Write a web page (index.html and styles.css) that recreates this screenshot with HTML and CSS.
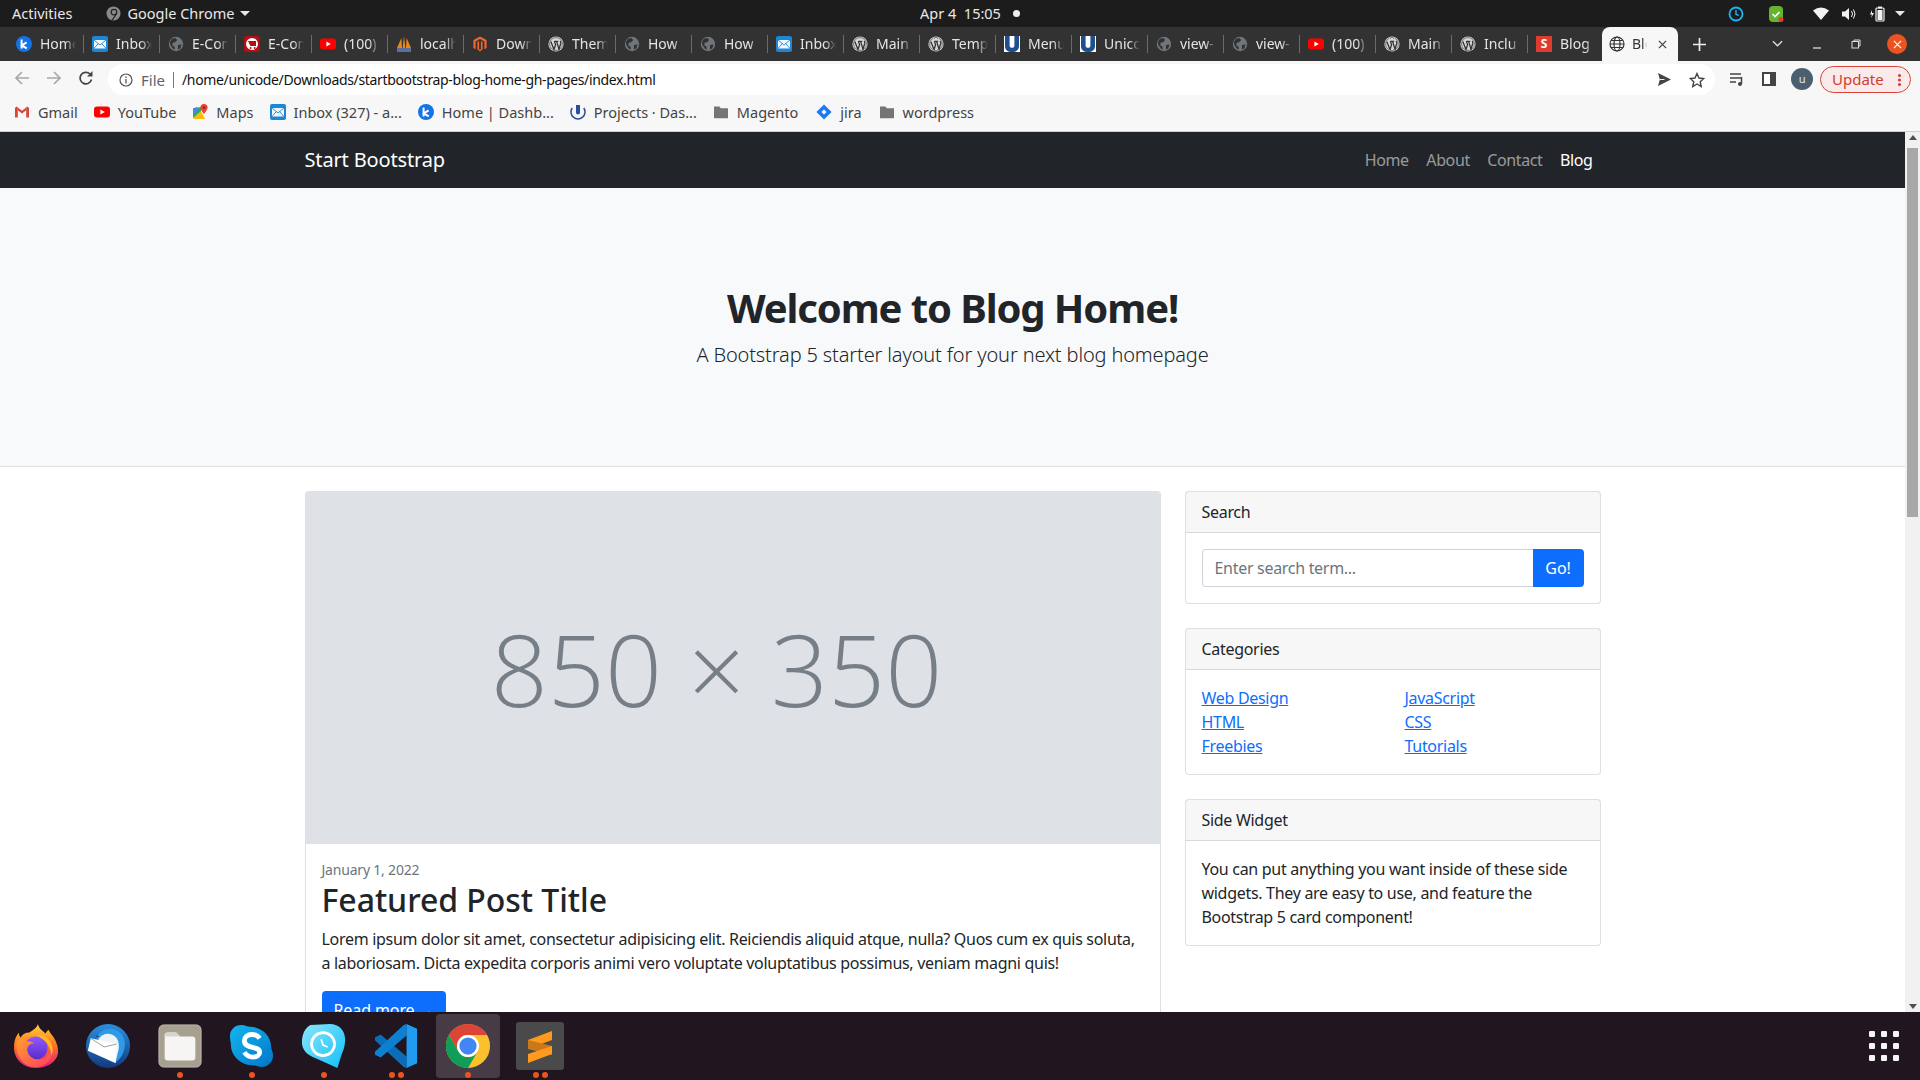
FILE: index.html
```html
<!DOCTYPE html>
<html lang="en">

<head>
    <meta charset="UTF-8">
    <meta name="viewport" content="width=device-width, initial-scale=1.0">
    <title>Blog Home</title>
    <link rel="stylesheet" href="styles.css">
</head>

<body>
    <svg class="defs" width="0" height="0">
        <symbol id="i-k" viewBox="0 0 16 16"><circle cx="8" cy="8" r="8" fill="#1473e6"/><path d="M5.6 3.6v8.8M10.6 6.4 5.8 9.4l5 3" fill="none" stroke="#fff" stroke-width="2"/></symbol>
        <symbol id="i-mail" viewBox="0 0 16 16"><rect width="16" height="16" rx="2" fill="#1c87d6"/><rect x="2" y="4" width="12" height="8.5" fill="#f4f8fc"/><path d="M2 4l6 5 6-5M2 12.5l4.4-5M14 12.5 9.6 7.5" fill="none" stroke="#1c87d6" stroke-width=".9"/></symbol>
        <symbol id="i-globe" viewBox="0 0 16 16"><circle cx="8" cy="8" r="7.2" fill="#70757a"/><path d="M4 2.8 7.4 2l1.8 2-2 2.2-2.4.4-.6 2.6 2.2 1.4.4 3-1.6-.6L2.4 9 1.8 6ZM10 9l3.6-.6-1.4 4L10 13.6Z" fill="#323232"/></symbol>
        <symbol id="i-ecom" viewBox="0 0 16 16"><rect width="16" height="16" rx="2" fill="#b30f14"/><circle cx="8" cy="8" r="6" fill="#fff"/><path d="M4 5h8v5H6.4Z" fill="#b30f14"/><circle cx="6.6" cy="12" r="1" fill="#b30f14"/><circle cx="10.6" cy="12" r="1" fill="#b30f14"/></symbol>
        <symbol id="i-yt" viewBox="0 0 16 16"><rect y="2.4" width="16" height="11.2" rx="3" fill="#f00"/><path d="M6.4 5.6 10.8 8l-4.4 2.4Z" fill="#fff"/></symbol>
        <symbol id="i-pma" viewBox="0 0 16 16"><path d="M1 12 5.4 2l.6 10ZM6.6 12 8 0l1.4 12ZM10 12 10.6 2 15 12Z" fill="#e8871e"/><rect x="1" y="12" width="14" height="4" fill="#5b6f99"/></symbol>
        <symbol id="i-mag" viewBox="0 0 16 16"><path d="M8 .4 14.6 4v8L12.4 13.2V5.4L8 2.9 3.6 5.4v7.8L1.4 12V4Z" fill="#ee672f"/><path d="M8.9 4.900 10.600 5.900v7.400L8 15.600 5.400 13.300V5.900L7.100 4.900v8.200L8 13.900l.9-.8Z" fill="#ee672f"/></symbol>
        <symbol id="i-wp" viewBox="0 0 16 16"><circle cx="8" cy="8" r="7.600" fill="#d8d8d8"/><circle cx="8" cy="8" r="6.400" fill="#d8d8d8" stroke="#323232" stroke-width=".6"/><path d="M2.800 5.600 6 13.400l1.600-4.600-1.200-3.400M6.200 5.400h4M8.600 5.400l2.400 7.800 1.800-6c.3-1.200-.4-1.800-.6-2.200" fill="none" stroke="#323232" stroke-width="1.300"/></symbol>
        <symbol id="i-u" viewBox="0 0 16 16"><rect width="16" height="16" fill="#fff"/><path d="M1 0h4.600v9.400c0 1.500 1 2.400 2.400 2.400s2.400-.9 2.400-2.400V0H15v10c0 4-3 6-7 6s-7-2-7-6Z" fill="#1e4f8f"/></symbol>
        <symbol id="i-gmail" viewBox="0 0 16 16"><path d="M1 3.400v10h2.800V7.200L8 10.400l4.200-3.200v6.200H15v-10l-1.600-1L8 6.400 2.600 2.400Z" fill="#f1f1f1"/><path d="M1 13.400V4l1.600-1.400 1.200 1v9.800ZM12.200 13.400V3.600l1.200-1L15 4v9.400Z" fill="#d9453a"/><path d="M3.800 3.600 8 6.800l4.200-3.200v2.600L8 9.400 3.800 6.200Z" fill="#d9453a"/></symbol>
        <symbol id="i-maps" viewBox="0 0 16 16"><path d="M1 4.500 9 3v12l-8-1Z" fill="#34a853"/><path d="M1 14 9 7l4 8H3Z" fill="#fbbc04"/><path d="M1 4.500 5 3l2 3-6 5Z" fill="#4285f4"/><path d="M12 0a3.600 3.600 0 0 0-3.600 3.600C8.400 6 12 10 12 10s3.600-4 3.600-6.400A3.600 3.600 0 0 0 12 0Z" fill="#ea4335"/><circle cx="12" cy="3.600" r="1.300" fill="#8c2a20"/></symbol>
        <symbol id="i-proj" viewBox="0 0 16 16"><path d="M2.200 4a7 7 0 1 0 11.600 0" fill="none" stroke="#2a4f9c" stroke-width="1.500"/><path d="M6 1h4v7.500a2 2 0 0 1-4 0Z" fill="#2a4f9c"/></symbol>
        <symbol id="i-jira" viewBox="0 0 16 16"><path d="M8 .4 15.600 8 8 15.600.4 8ZM8 5.400 5.400 8 8 10.600 10.600 8Z" fill="#1f7bf2"/></symbol>
        <symbol id="i-folder" viewBox="0 0 16 16"><path d="M1 2.500h5.400l1.400 1.800H15v10H1Z" fill="#757575"/></symbol>
    </svg>

    <div class="topbar">
        <div class="topbar-left">
            <span>Activities</span>
            <span class="app-name">
                <svg class="app-icon" viewBox="0 0 16 16"><circle cx="8" cy="8" r="7.500" fill="#8a8a8a"/><circle cx="8.500" cy="6.500" r="3" fill="none" stroke="#222" stroke-width="1.300"/><path d="M11 8c-1 3-3 5-4.500 7" fill="none" stroke="#222" stroke-width="1.300"/></svg>
                Google Chrome
                <i class="caret"></i>
            </span>
        </div>
        <div class="clock">Apr 4&nbsp; 15:05 <i class="dot"></i></div>
        <div class="tray">
            <svg class="tray-clock" viewBox="0 0 16 16"><circle cx="8" cy="8" r="6.500" fill="none" stroke="#19b5f1" stroke-width="1.800"/><path d="M8 4v4.400l2.800 1" fill="none" stroke="#19b5f1" stroke-width="1.400"/></svg>
            <svg class="tray-check" viewBox="0 0 16 16"><rect x="1" width="14" height="16" rx="4" fill="#66b32e"/><path d="M4.500 8 7 10.500 11.500 6" fill="none" stroke="#fff" stroke-width="1.600"/><circle cx="13" cy="13.500" r="2.500" fill="#e53935"/></svg>
            <svg class="tray-wifi" viewBox="0 0 16 16"><path d="M0 4.500Q8-1.500 16 4.500L8 14Z" fill="#f2f2f2"/></svg>
            <svg class="tray-sound" viewBox="0 0 16 16"><path d="M1 5.500h3L8 2v12L4 10.500H1Z" fill="#f2f2f2"/><path d="M10.500 5q2 3 0 6M12.500 3.500q3 4.500 0 9" fill="none" stroke="#f2f2f2"/></svg>
            <svg class="tray-batt" viewBox="0 0 16 16"><path d="M3 4 1 8.500h2L2 12l3-5H3Z" fill="#f2f2f2"/><rect x="7" y="2" width="8" height="13" rx="1" fill="none" stroke="#f2f2f2" stroke-width="1.200"/><rect x="9" y="0.500" width="4" height="2" fill="#f2f2f2"/><rect x="8.500" y="4" width="5" height="10" fill="#f2f2f2"/></svg>
            <i class="caret caret-tray"></i>
        </div>
    </div>

    <div class="tabstrip">
        <div class="tab"><svg class="fav"><use href="#i-k"/></svg><span class="tab-title">Home</span></div>
        <div class="tab"><svg class="fav"><use href="#i-mail"/></svg><span class="tab-title">Inbox</span></div>
        <div class="tab"><svg class="fav"><use href="#i-globe"/></svg><span class="tab-title">E-Com</span></div>
        <div class="tab"><svg class="fav"><use href="#i-ecom"/></svg><span class="tab-title">E-Com</span></div>
        <div class="tab"><svg class="fav"><use href="#i-yt"/></svg><span class="tab-title">(100)</span></div>
        <div class="tab"><svg class="fav"><use href="#i-pma"/></svg><span class="tab-title">localh</span></div>
        <div class="tab"><svg class="fav"><use href="#i-mag"/></svg><span class="tab-title">Down</span></div>
        <div class="tab"><svg class="fav"><use href="#i-wp"/></svg><span class="tab-title">Them</span></div>
        <div class="tab"><svg class="fav"><use href="#i-globe"/></svg><span class="tab-title">How</span></div>
        <div class="tab"><svg class="fav"><use href="#i-globe"/></svg><span class="tab-title">How</span></div>
        <div class="tab"><svg class="fav"><use href="#i-mail"/></svg><span class="tab-title">Inbox</span></div>
        <div class="tab"><svg class="fav"><use href="#i-wp"/></svg><span class="tab-title">Main</span></div>
        <div class="tab"><svg class="fav"><use href="#i-wp"/></svg><span class="tab-title">Temp</span></div>
        <div class="tab"><svg class="fav"><use href="#i-u"/></svg><span class="tab-title">Menu</span></div>
        <div class="tab"><svg class="fav"><use href="#i-u"/></svg><span class="tab-title">Unicc</span></div>
        <div class="tab"><svg class="fav"><use href="#i-globe"/></svg><span class="tab-title">view-</span></div>
        <div class="tab"><svg class="fav"><use href="#i-globe"/></svg><span class="tab-title">view-</span></div>
        <div class="tab"><svg class="fav"><use href="#i-yt"/></svg><span class="tab-title">(100)</span></div>
        <div class="tab"><svg class="fav"><use href="#i-wp"/></svg><span class="tab-title">Main</span></div>
        <div class="tab"><svg class="fav"><use href="#i-wp"/></svg><span class="tab-title">Inclu</span></div>
        <div class="tab tab-last"><span class="fav-s">S</span><span class="tab-title">Blog</span></div>
        <div class="tab tab-active">
            <svg class="fav" viewBox="0 0 16 16"><g fill="none" stroke="#333" stroke-width="1.200"><circle cx="8" cy="8" r="7"/><ellipse cx="8" cy="8" rx="3" ry="7"/><path d="M1 8h14M2 4.500h12M2 11.500h12"/></g></svg>
            <span class="tab-title tab-title-short">Blog</span>
            <svg class="tab-close" viewBox="0 0 10 10"><path d="M1 1l8 8M9 1l-8 8" stroke="#444" stroke-width="1.400"/></svg>
        </div>
        <svg class="new-tab" viewBox="0 0 14 14"><path d="M7 0v14M0 7h14" stroke="#eee" stroke-width="1.800"/></svg>
        <div class="win-controls">
            <svg class="win-chevron" viewBox="0 0 12 8"><path d="M1 1l5 5 5-5" fill="none" stroke="#ddd" stroke-width="1.500"/></svg>
            <svg class="win-min" viewBox="0 0 10 10"><path d="M1 9h8" stroke="#ddd" stroke-width="1.300"/></svg>
            <svg class="win-max" viewBox="0 0 10 10"><rect x="1" y="2.500" width="6.500" height="6.500" fill="none" stroke="#ddd"/><path d="M3 2.500V1h6v6H7.500" fill="none" stroke="#ddd"/></svg>
            <span class="win-close"><svg viewBox="0 0 10 10"><path d="M1 1l8 8M9 1l-8 8" stroke="#fff" stroke-width="1.300"/></svg></span>
        </div>
    </div>

    <div class="toolbar">
        <svg class="nav-icon" viewBox="0 0 16 16"><path d="M15 8H2M8 2 2 8l6 6" fill="none" stroke="#a8a8a8" stroke-width="1.700"/></svg>
        <svg class="nav-icon" viewBox="0 0 16 16"><path d="M1 8h13M8 2l6 6-6 6" fill="none" stroke="#a8a8a8" stroke-width="1.700"/></svg>
        <svg class="nav-icon" viewBox="0 0 16 16"><path d="M13.500 9.500A5.800 5.800 0 1 1 12 4" fill="none" stroke="#444" stroke-width="1.700"/><path d="M14.500 1v5.500H9Z" fill="#444"/></svg>
        <div class="omnibox">
            <svg class="info-icon" viewBox="0 0 14 14"><circle cx="7" cy="7" r="6" fill="none" stroke="#555" stroke-width="1.200"/><path d="M7 6v4.500M7 3.500v1.500" stroke="#555" stroke-width="1.300"/></svg>
            <span class="scheme">File</span>
            <span class="url">/home/unicode/Downloads/startbootstrap-blog-home-gh-pages/index.html</span>
            <svg class="omni-send" viewBox="0 0 16 14"><path d="M1 0 15 7 1 14 3 7Z" fill="#444"/><path d="M3 7h5" stroke="#fff"/></svg>
            <svg class="omni-star" viewBox="0 0 16 16"><path d="M8 1.500 10 6l4.800.5-3.600 3.200 1 4.800L8 12l-4.200 2.500 1-4.800L1.200 6.500 6 6Z" fill="none" stroke="#444" stroke-width="1.400"/></svg>
        </div>
        <svg class="tool-media" viewBox="0 0 16 16"><path d="M1 3h11M1 7h11M1 11h6" stroke="#444" stroke-width="1.500"/><path d="M12.500 6v7" stroke="#444" stroke-width="1.500"/><circle cx="11" cy="13" r="2" fill="#444"/></svg>
        <svg class="tool-panel" viewBox="0 0 14 14"><rect x="1" y="1" width="12" height="12" fill="#fff" stroke="#444" stroke-width="2"/><rect x="8" y="1" width="5" height="12" fill="#444"/></svg>
        <span class="avatar">u</span>
        <span class="update">Update <i class="update-dots"></i></span>
    </div>

    <div class="bookmarks">
        <a class="bookmark"><svg class="fav"><use href="#i-gmail"/></svg>Gmail</a>
        <a class="bookmark"><svg class="fav"><use href="#i-yt"/></svg>YouTube</a>
        <a class="bookmark"><svg class="fav"><use href="#i-maps"/></svg>Maps</a>
        <a class="bookmark"><svg class="fav"><use href="#i-mail"/></svg>Inbox (327) - a...</a>
        <a class="bookmark"><svg class="fav"><use href="#i-k"/></svg>Home | Dashb...</a>
        <a class="bookmark"><svg class="fav"><use href="#i-proj"/></svg>Projects · Das...</a>
        <a class="bookmark"><svg class="fav"><use href="#i-folder"/></svg>Magento</a>
        <a class="bookmark bookmark-jira"><svg class="fav"><use href="#i-jira"/></svg>jira</a>
        <a class="bookmark"><svg class="fav"><use href="#i-folder"/></svg>wordpress</a>
    </div>

    <div class="viewport">
        <div class="page">
            <nav class="navbar">
                <div class="container navbar-inner">
                    <a class="brand">Start Bootstrap</a>
                    <ul class="nav-links">
                        <li>Home</li>
                        <li>About</li>
                        <li>Contact</li>
                        <li class="active">Blog</li>
                    </ul>
                </div>
            </nav>

            <header class="hero">
                <h1>Welcome to Blog Home!</h1>
                <p class="lead">A Bootstrap 5 starter layout for your next blog homepage</p>
            </header>

            <div class="container columns">
                <main class="col-main">
                    <div class="card">
                        <div class="placeholder"><span>850 × 350</span></div>
                        <div class="card-body">
                            <div class="post-date">January 1, 2022</div>
                            <h2 class="post-title">Featured Post Title</h2>
                            <p class="post-text">Lorem ipsum dolor sit amet, consectetur adipisicing elit. Reiciendis aliquid atque, nulla? Quos cum ex quis soluta, a laboriosam. Dicta expedita corporis animi vero voluptate voluptatibus possimus, veniam magni quis!</p>
                            <a class="btn btn-read">Read more →</a>
                        </div>
                    </div>
                </main>
                <aside class="col-side">
                    <div class="card">
                        <div class="card-header">Search</div>
                        <div class="card-body">
                            <div class="search">
                                <input class="search-input" type="text" placeholder="Enter search term...">
                                <a class="btn btn-go">Go!</a>
                            </div>
                        </div>
                    </div>
                    <div class="card">
                        <div class="card-header">Categories</div>
                        <div class="card-body cat-grid">
                            <a href="#">Web Design</a>
                            <a href="#">JavaScript</a>
                            <a href="#">HTML</a>
                            <a href="#">CSS</a>
                            <a href="#">Freebies</a>
                            <a href="#">Tutorials</a>
                        </div>
                    </div>
                    <div class="card">
                        <div class="card-header">Side Widget</div>
                        <div class="card-body">You can put anything you want inside of these side widgets. They are easy to use, and feature the Bootstrap 5 card component!</div>
                    </div>
                </aside>
            </div>
        </div>
        <div class="scrollbar">
            <i class="arrow arrow-up"></i>
            <div class="thumb"></div>
            <i class="arrow arrow-down"></i>
        </div>
    </div>

    <div class="dock">
        <div class="dock-item">
            <svg class="dock-icon" viewBox="0 0 48 48">
                <defs>
                    <linearGradient id="ff" x1="0" y1="0" x2="0" y2="1"><stop offset="0" stop-color="#ffd23a"/><stop offset=".45" stop-color="#ff7a1f"/><stop offset="1" stop-color="#e6197e"/></linearGradient>
                    <linearGradient id="ff2" x1="0" y1="0" x2="1" y2="1"><stop offset="0" stop-color="#ffa02e"/><stop offset="1" stop-color="#ff3f5f"/></linearGradient>
                    <linearGradient id="ff3" x1="0" y1="0" x2="0" y2="1"><stop offset="0" stop-color="#9059ff"/><stop offset="1" stop-color="#5b2bc9"/></linearGradient>
                </defs>
                <path d="M26 1c1 5 5 7 8 10 1-2 2-3 3-4 1 3 6 7 8 13 2 5 2 7 2 10 0 9-10 17-23 17S1 38 1 25c0-4 1-9 3-12l2-3c0 3 1 4 2 5 2-3 5-5 9-5 3-2 8-5 9-9Z" fill="url(#ff)"/>
                <circle cx="24" cy="26" r="12" fill="url(#ff3)"/>
                <path d="M4 20c3-5 9-7 13-5-2 1-3 2-3 4 3 0 6 0 8 2-4 0-8 3-7 8 1 6 7 10 13 9 7-1 11-6 13-12 2 12-8 21-20 20C10 45 2 32 4 20Z" fill="url(#ff2)"/>
                <path d="M24 13c8-2 15 3 17 12 1 4 0 7-1 9 0-8-5-17-16-21Z" fill="#ffb52e"/>
            </svg>
        </div>
        <div class="dock-item">
            <svg class="dock-icon" viewBox="0 0 48 48">
                <defs><linearGradient id="tb" x1="0" y1="0" x2="0" y2="1"><stop offset="0" stop-color="#2a8fe0"/><stop offset="1" stop-color="#123a80"/></linearGradient></defs>
                <circle cx="24" cy="24" r="23" fill="url(#tb)"/>
                <path d="M12 16c3-9 12-12 20-9 9 4 11 13 9 20-1 6-5 11-9 14l-8-10Z" fill="#2f9be8"/>
                <path d="M14 17c3-5 9-7 14-5 7 3 8 10 7 16l-3 12-16-12Z" fill="#eef3f8"/>
                <path d="M6 16 33 22 32 42 3 29Z" fill="#fff"/>
                <path d="M6 16 20 25 33 22" fill="none" stroke="#9a9a9a"/>
                <circle cx="13" cy="14" r="1" fill="#622"/>
            </svg>
        </div>
        <div class="dock-item">
            <svg class="dock-icon" viewBox="0 0 48 48">
                <rect x="2" y="2" width="44" height="44" rx="5" fill="#a79f8f" stroke="#c0baad"/>
                <path d="M8 13a3 3 0 0 1 3-3h9l4 4h13a3 3 0 0 1 3 3v19a3 3 0 0 1-3 3H11a3 3 0 0 1-3-3Z" fill="#f6f5f3"/>
                <path d="M8 13a3 3 0 0 1 3-3h9l4 4H8Z" fill="#d8d5cf"/>
            </svg>
        </div>
        <div class="dock-item">
            <svg class="dock-icon" viewBox="0 0 48 48">
                <defs><linearGradient id="sk" x1="0" y1="0" x2="1" y2="1"><stop offset="0" stop-color="#13b6ef"/><stop offset="1" stop-color="#0176c9"/></linearGradient></defs>
                <path d="M13 2c4 0 6 2 9 2 12 0 22 9 22 21 0 3 2 5 2 9 0 7-6 12-12 12-4 0-6-2-10-2C12 44 2 34 2 23c0-3-1-5-1-9C1 7 6 2 13 2Z" fill="url(#sk)"/>
                <path d="M32 16c-2-3-5-4-8-4-5 0-8 3-8 6.500 0 9 16 5 16 12 0 3-3 5-7 5s-7-2-9-5" fill="none" stroke="#fff" stroke-width="5"/>
            </svg>
        </div>
        <div class="dock-item">
            <svg class="dock-icon" viewBox="0 0 48 48">
                <defs><linearGradient id="cl" x1="0" y1="0" x2="1" y2="1"><stop offset="0" stop-color="#8be6fb"/><stop offset="1" stop-color="#11c0fa"/></linearGradient></defs>
                <path d="M10 2 30 1C40 1 46 8 46 17 46 25 44 29 42 34L38 47 16 37C5 33 1 27 1 20 1 12 4 5 10 2Z" fill="url(#cl)"/>
                <circle cx="23" cy="22" r="12" fill="none" stroke="#fff" stroke-width="2.800"/>
                <path d="M21 17 23 23 28 25" fill="none" stroke="#fff" stroke-width="1.800"/>
            </svg>
        </div>
        <div class="dock-item">
            <svg class="dock-icon" viewBox="0 0 48 48">
                <path d="M35 47V35L8 12 2 15v3L32 46Z" fill="#0b6db8"/>
                <path d="M35 1V13L8 36 2 33v-3L32 2Z" fill="#0e80d2"/>
                <path d="M35 1 46 6V42L35 47Z" fill="#1f9cf0"/>
            </svg>
        </div>
        <div class="dock-item dock-active">
            <svg class="dock-icon" viewBox="0 0 48 48">
                <circle cx="24" cy="24" r="23" fill="#fbc02d"/>
                <path d="M4.100 12.500A23 23 0 0 1 43.900 12.500H24A11.500 11.500 0 0 0 14 29.750Z" fill="#db4437"/>
                <path d="M4.100 12.500 14 29.750A11.500 11.500 0 0 0 34 29.750L24 47A23 23 0 0 1 4.100 12.500Z" fill="#0f9d58"/>
                <circle cx="24" cy="24" r="11.500" fill="#fff"/>
                <circle cx="24" cy="24" r="9" fill="#4285f4"/>
            </svg>
        </div>
        <div class="dock-item">
            <svg class="dock-icon dock-icon-big" viewBox="0 0 48 48">
                <rect width="48" height="48" rx="3" fill="#4a4a4a"/>
                <path d="M36 9 12 18v9l24-9Z" fill="#ff9a1f"/>
                <path d="M12 27 36 33v-9L12 18Z" fill="#c9781a"/>
                <path d="M36 24 12 32v9l24-9Z" fill="#ff9a1f"/>
            </svg>
        </div>
        <div class="dock-dots">
            <i class="dots dots-1"></i><i class="dots dots-1"></i><i class="dots dots-1"></i><i class="dots dots-2"></i><i class="dots dots-1"></i><i class="dots dots-2"></i>
        </div>
        <div class="app-grid">
            <i></i><i></i><i></i><i></i><i></i><i></i><i></i><i></i><i></i>
        </div>
    </div>
</body>

</html>
```
FILE: styles.css
```css
* {
    box-sizing: border-box;
}

body {
    margin: 0;
    width: 1920px;
    height: 1080px;
    overflow: hidden;
    display: flex;
    flex-direction: column;
    font-family: "Noto Sans", "Open Sans", sans-serif;
    font-size: 16px;
    line-height: 24px;
    color: #212529;
    letter-spacing: -0.3px;
}

.defs {
    position: absolute;
}

/* ubuntu top bar */
.topbar {
    height: 27px;
    flex: none;
    background: #1c1c1c;
    color: #e8e8e8;
    font-size: 14.5px;
    line-height: 27px;
    letter-spacing: 0;
    display: grid;
    grid-template-columns: 1fr auto 1fr;
    padding: 0 12px;
}

.topbar-left {
    display: flex;
    gap: 34px;
}

.app-name {
    display: flex;
    align-items: center;
    gap: 6px;
}

.app-icon {
    width: 15px;
    height: 15px;
}

.caret {
    width: 0;
    height: 0;
    border: 5px solid transparent;
    border-top: 5px solid #e8e8e8;
    border-bottom: 0;
}

.clock {
    display: flex;
    align-items: center;
    gap: 8px;
    margin-left: 20px;
}

.dot {
    width: 7px;
    height: 7px;
    margin-left: 4px;
    border-radius: 50%;
    background: #eee;
}

.tray {
    display: flex;
    align-items: center;
    justify-content: flex-end;
}

.tray svg {
    width: 16px;
    height: 16px;
}

.tray-clock {
    margin-right: 24px;
}

.tray-check {
    margin-right: 29px;
}

.tray-wifi {
    margin-right: 12px;
}

.tray-sound {
    margin-right: 12px;
}

.caret-tray {
    margin-left: 10px;
    margin-right: 3px;
}

/* chrome tabs */
.tabstrip {
    height: 34px;
    flex: none;
    background: #323232;
    display: flex;
    align-items: center;
    padding-left: 8px;
    color: #e4e4e4;
    font-size: 14px;
    letter-spacing: 0;
}

.tab {
    width: 76px;
    height: 34px;
    flex: none;
    display: flex;
    align-items: center;
    gap: 8px;
    padding-left: 8px;
    position: relative;
}

.tab::after {
    content: "";
    position: absolute;
    right: 0;
    top: 8px;
    height: 18px;
    width: 1px;
    background: #6b6b6b;
}

.tab-last::after,
.tab-active::after {
    display: none;
}

.fav {
    width: 16px;
    height: 16px;
    flex: none;
}

.fav-s {
    width: 16px;
    height: 16px;
    flex: none;
    background: #df3b30;
    color: #fff;
    font-size: 12px;
    font-weight: 700;
    line-height: 16px;
    text-align: center;
}

.tab-title {
    width: 36px;
    overflow: hidden;
    white-space: nowrap;
    -webkit-mask-image: linear-gradient(to right, #000 70%, transparent);
    mask-image: linear-gradient(to right, #000 70%, transparent);
}

.tab-active {
    background: #f7f7f7;
    color: #333;
    border-radius: 8px 8px 0 0;
    gap: 7px;
    margin-left: -2px;
    padding-left: 7px;
}

.tab-active .tab-title-short {
    width: 15px;
}

.tab-close {
    width: 9px;
    height: 9px;
    margin-left: 4px;
}

.new-tab {
    width: 13px;
    height: 13px;
    margin-left: 15px;
}

.win-controls {
    margin-left: auto;
    display: flex;
    align-items: center;
    padding-right: 13px;
}

.win-chevron {
    width: 11px;
    height: 8px;
    margin-right: 29px;
}

.win-min {
    width: 10px;
    height: 10px;
    margin-right: 29px;
}

.win-max {
    width: 10px;
    height: 10px;
    margin-right: 26px;
}

.win-close {
    width: 20px;
    height: 20px;
    border-radius: 50%;
    background: #e95420;
    display: flex;
    align-items: center;
    justify-content: center;
}

.win-close svg {
    width: 9px;
    height: 9px;
}

/* address bar */
.toolbar {
    height: 34px;
    flex: none;
    background: #f7f7f7;
    display: flex;
    align-items: center;
    padding-left: 14px;
}

.nav-icon {
    width: 16px;
    height: 16px;
    margin-right: 16px;
}

.omnibox {
    width: 1607px;
    height: 31px;
    margin: 3px 0 0 -2px;
    background: #fff;
    border-radius: 16px;
    display: flex;
    align-items: center;
    padding-left: 11px;
    font-size: 14px;
}

.info-icon {
    width: 14px;
    height: 14px;
}

.scheme {
    color: #5f6368;
    font-size: 15px;
    letter-spacing: 0;
    margin-left: 8px;
    padding-right: 8px;
    border-right: 1px solid #777;
    line-height: 16px;
}

.url {
    margin-left: 8px;
    color: #111;
    letter-spacing: -0.35px;
}

.omni-send {
    width: 15px;
    height: 13px;
    margin-left: auto;
}

.omni-star {
    width: 16px;
    height: 16px;
    margin: 0 10px 0 17px;
}

.tool-media {
    width: 16px;
    height: 16px;
    margin-left: 14px;
    margin-top: 2px;
}

.tool-panel {
    width: 14px;
    height: 14px;
    margin-left: 17px;
    margin-top: 2px;
}

.avatar {
    width: 22px;
    height: 22px;
    margin: 2px 0 0 15px;
    border-radius: 50%;
    background: #4a5f70;
    color: #e8e8e8;
    font-size: 11px;
    line-height: 21px;
    text-align: center;
}

.update {
    width: 91px;
    height: 27px;
    margin: 2px 0 0 7px;
    border: 1px solid #d8423a;
    border-radius: 14px;
    background: #fbeaea;
    color: #d33b32;
    font-size: 15px;
    letter-spacing: 0;
    line-height: 25px;
    padding-left: 11px;
    position: relative;
}

.update-dots {
    position: absolute;
    right: 9px;
    top: 7px;
    width: 3px;
    height: 3px;
    border-radius: 50%;
    background: #d33b32;
    box-shadow: 0 4.500px 0 #d33b32, 0 9px 0 #d33b32;
}

/* bookmarks */
.bookmarks {
    height: 37px;
    flex: none;
    background: #f7f7f7;
    border-bottom: 1px solid #cfcfcf;
    display: flex;
    align-items: center;
    padding: 0 14px 2px;
    gap: 16px;
    font-size: 14.5px;
    letter-spacing: 0;
    color: #444;
}

.bookmark {
    display: flex;
    align-items: center;
    gap: 8px;
}

.bookmark-jira {
    margin: 0 1px 0 2px;
}

/* page */
.viewport {
    flex: 1;
    min-height: 0;
    display: flex;
    overflow: hidden;
}

.page {
    flex: 1;
    min-width: 0;
    background: #fff;
}

.container {
    width: 1320px;
    margin: 0 auto;
    padding: 0 12px;
}

.navbar {
    height: 56px;
    background: #212529;
}

.navbar-inner {
    height: 100%;
    display: flex;
    align-items: center;
    justify-content: space-between;
}

.brand {
    color: #fff;
    font-size: 20px;
    letter-spacing: -0.15px;
}

.nav-links {
    display: flex;
    margin: 0;
    padding: 0;
    list-style: none;
    letter-spacing: -0.4px;
    color: rgba(255, 255, 255, 0.55);
}

.nav-links li {
    padding: 0 8.8px;
}

.nav-links .active {
    color: #fff;
    padding-right: 8px;
}

.hero {
    background: #f8f9fa;
    border-bottom: 1px solid #dee2e6;
    margin-bottom: 24px;
    padding: 96px 0;
    text-align: center;
}

.hero h1 {
    margin: 0 0 8px;
    font-size: 40px;
    line-height: 48px;
    font-weight: 700;
    letter-spacing: -1.1px;
}

.lead {
    margin: 0;
    font-size: 20px;
    line-height: 30px;
    font-weight: 300;
    letter-spacing: -0.15px;
}

.columns {
    display: grid;
    grid-template-columns: 856px 416px;
    gap: 24px;
}

.card {
    background: #fff;
    border: 1px solid rgba(0, 0, 0, 0.125);
    border-radius: 4px;
    margin-bottom: 24px;
}

.card-header {
    background: rgba(0, 0, 0, 0.03);
    border-bottom: 1px solid rgba(0, 0, 0, 0.125);
    padding: 8px 16px;
}

.card-body {
    padding: 16px;
}

.placeholder {
    height: 352px;
    background: #dee2e6;
    border-radius: 3px 3px 0 0;
    display: flex;
    align-items: center;
    justify-content: center;
    padding-right: 32px;
    font-family: "Open Sans", sans-serif;
    font-weight: 300;
    font-size: 100px;
    line-height: 1;
    color: #767f87;
    letter-spacing: 0;
}

.post-date {
    font-size: 14px;
    line-height: 19px;
    margin-bottom: 2px;
    color: #6c757d;
    letter-spacing: -0.2px;
}

.post-title {
    margin: 0 0 8px;
    font-size: 32px;
    line-height: 38px;
    font-weight: 500;
    letter-spacing: -0.05px;
}

.post-text {
    margin: 0 0 16px;
}

.btn {
    display: inline-block;
    background: #0d6efd;
    color: #fff;
    border-radius: 4px;
    padding: 7px 12px;
    letter-spacing: -0.1px;
}

.search {
    display: flex;
    height: 38px;
}

.search-input {
    flex: 1;
    min-width: 0;
    border: 1px solid #ced4da;
    border-right: 0;
    border-radius: 4px 0 0 4px;
    padding: 6px 12px;
    font: inherit;
    letter-spacing: inherit;
}

.search-input::placeholder {
    color: #6c757d;
}

.btn-go {
    width: 51px;
    border-radius: 0 4px 4px 0;
    text-align: center;
    padding: 7px 0;
}

.cat-grid {
    display: grid;
    grid-template-columns: 1fr 1fr;
    column-gap: 24px;
    padding-bottom: 16px;
    justify-items: start;
}

.cat-grid a {
    color: #0d6efd;
}

/* scrollbar */
.scrollbar {
    width: 15px;
    flex: none;
    background: #f1f1f1;
    display: flex;
    flex-direction: column;
    align-items: center;
    position: relative;
}

.thumb {
    position: absolute;
    top: 16px;
    left: 2px;
    width: 11px;
    height: 369px;
    background: #a8a8a8;
}

.arrow {
    width: 0;
    height: 0;
    border: 4px solid transparent;
    position: absolute;
}

.arrow-up {
    top: 3px;
    border-top: 0;
    border-bottom: 5px solid #505050;
}

.arrow-down {
    bottom: 3px;
    border-bottom: 0;
    border-top: 5px solid #505050;
}

/* dock */
.dock {
    height: 68px;
    flex: none;
    background: #211520;
    display: flex;
    align-items: center;
    padding-left: 4px;
    position: relative;
}

.dock-item {
    width: 64px;
    height: 64px;
    margin-right: 8px;
    border-radius: 4px;
    display: flex;
    align-items: center;
    justify-content: center;
}

.dock-active {
    background: #473c45;
}

.dock-icon {
    width: 46px;
    height: 46px;
}

.dock-icon-big {
    width: 48px;
    height: 48px;
}

.dock-dots {
    position: absolute;
    left: 0;
    bottom: 2px;
    height: 6px;
    display: grid;
    grid-template-columns: repeat(6, 72px);
    padding-left: 144px;
    justify-items: center;
}

.dots {
    width: 6px;
    height: 6px;
    border-radius: 50%;
    background: #e95420;
}

.dots-2 {
    box-shadow: 9px 0 0 #e95420;
    margin-left: -9px;
}

.app-grid {
    margin-left: auto;
    margin-right: 21px;
    display: grid;
    grid-template-columns: repeat(3, 6px);
    gap: 6px;
}

.app-grid i {
    width: 6px;
    height: 6px;
    border-radius: 1px;
    background: #f4f4f4;
}
```
